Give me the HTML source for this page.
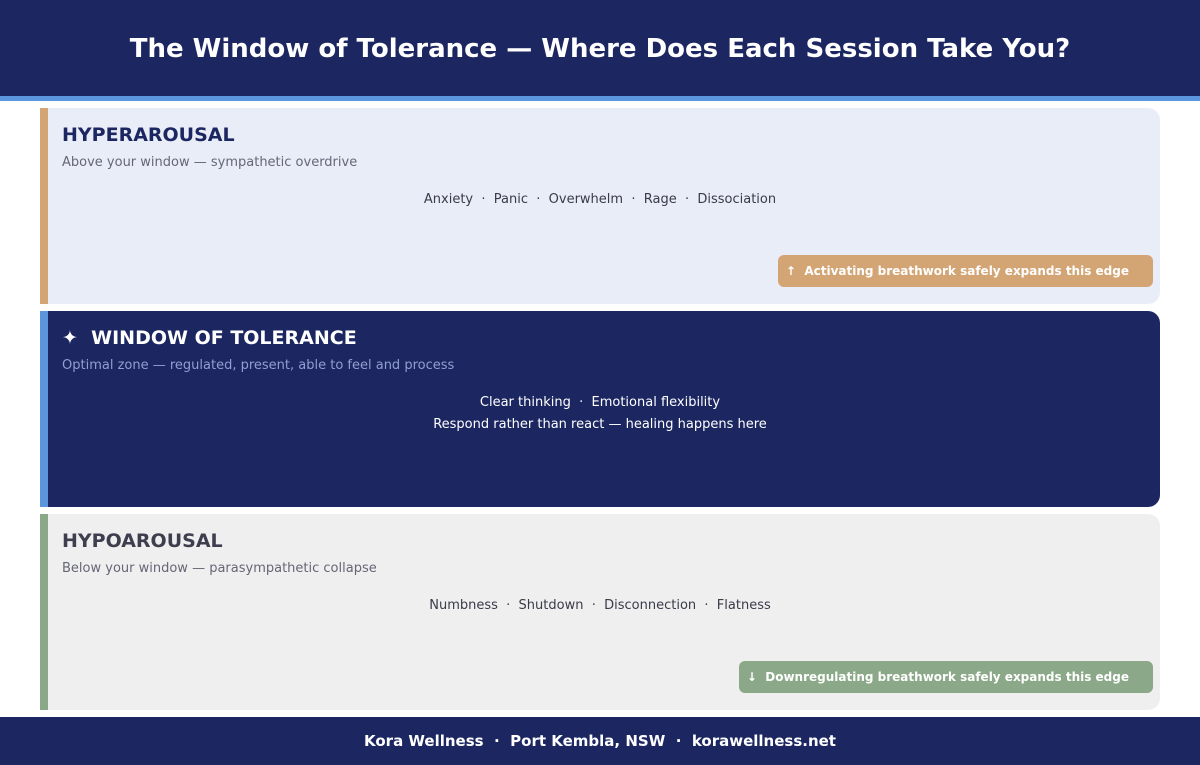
<html><head><style>
body{margin:0;width:1200px;height:765px;background:#fff;font-family:"DejaVu Sans","Liberation Sans",sans-serif;position:relative;overflow:hidden}
.hdr{position:absolute;left:0;top:1px;width:1200px;height:96px;background:#1c2762;color:#fff;font-weight:bold;font-size:26px;text-align:center;line-height:96px}
.hb{position:absolute;left:0;top:0;width:1200px;height:2px;background:#1c2762}
.str{position:absolute;left:0;top:96px;width:1200px;height:5px;background:#5b95dc}
.p{position:absolute;left:40px;width:1120px;height:196px;box-sizing:border-box;border-left:8px solid;border-radius:0 12px 12px 0}
.t{position:absolute;left:14px;top:16px;font-size:19px;font-weight:bold}
.s{position:absolute;left:14px;top:47px;font-size:13px}
.c{position:absolute;left:-8px;right:0;top:81px;text-align:center;font-size:13px;line-height:22px}
.b{position:absolute;right:7px;top:147px;height:32px;border-radius:6px;color:#fff;font-weight:bold;font-size:12px;line-height:32px;padding:0 24px 0 8px}
.f{position:absolute;left:0;top:717px;width:1200px;height:48px;background:#1c2762;color:#fff;font-weight:bold;font-size:15px;text-align:center;line-height:48px}
</style></head><body>
<div class="hb"></div>
<div class="hdr">The Window of Tolerance — Where Does Each Session Take You?</div>
<div class="str"></div>
<div class="p" style="top:108px;background:#e9edf8;border-color:#d4a574">
<div class="t" style="color:#1c2762">HYPERAROUSAL</div>
<div class="s" style="color:#666677">Above your window — sympathetic overdrive</div>
<div class="c" style="color:#3a3a4a">Anxiety &nbsp;·&nbsp; Panic &nbsp;·&nbsp; Overwhelm &nbsp;·&nbsp; Rage &nbsp;·&nbsp; Dissociation</div>
<div class="b" style="background:#d4a574">↑&nbsp; Activating breathwork safely expands this edge</div>
</div>
<div class="p" style="top:311px;background:#1c2762;border-color:#5b95dc">
<div class="t" style="color:#fff">✦&nbsp; WINDOW OF TOLERANCE</div>
<div class="s" style="color:#8f9fd0">Optimal zone — regulated, present, able to feel and process</div>
<div class="c" style="color:#fff">Clear thinking &nbsp;·&nbsp; Emotional flexibility<br>Respond rather than react — healing happens here</div>
</div>
<div class="p" style="top:514px;background:#efefef;border-color:#8ba888">
<div class="t" style="color:#3e3e4e">HYPOAROUSAL</div>
<div class="s" style="color:#666677">Below your window — parasympathetic collapse</div>
<div class="c" style="color:#3a3a4a">Numbness &nbsp;·&nbsp; Shutdown &nbsp;·&nbsp; Disconnection &nbsp;·&nbsp; Flatness</div>
<div class="b" style="background:#8ba888">↓&nbsp; Downregulating breathwork safely expands this edge</div>
</div>
<div class="f">Kora Wellness &nbsp;·&nbsp; Port Kembla, NSW &nbsp;·&nbsp; korawellness.net</div>
</body></html>
